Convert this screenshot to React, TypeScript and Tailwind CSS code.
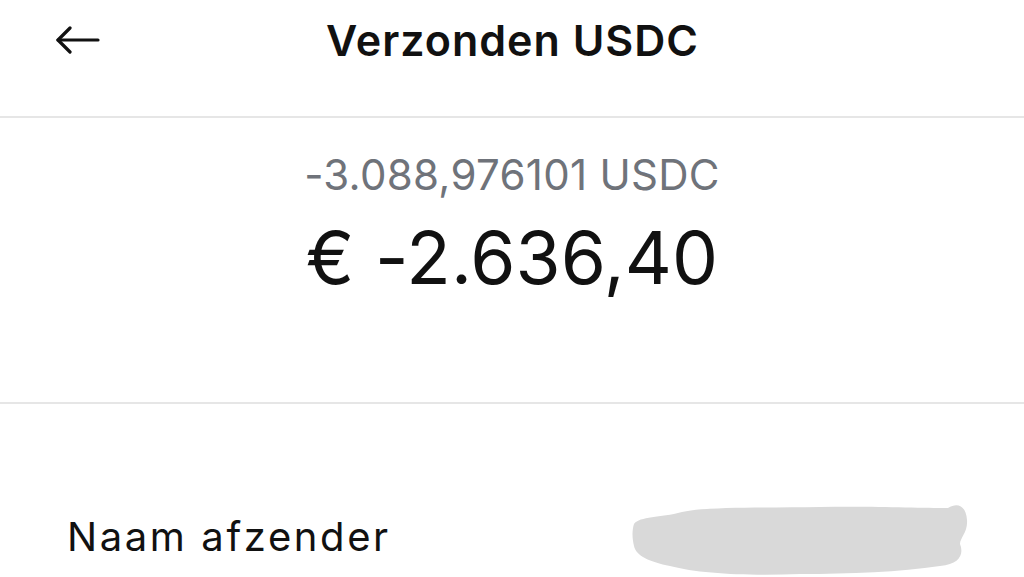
export default function App() {
  return (
    <div className="w-[1024px] h-[577px] overflow-hidden bg-white text-[#111111] font-['Inter','Liberation_Sans',sans-serif]">
      {/* Header */}
      <div className="relative h-[118px] border-b-2 border-[#e6e6e6] flex items-start justify-center pt-[16px]">
        <button aria-label="Terug" className="absolute left-[55px] top-[26px] w-[46px] h-[28px]">
          <svg width="46" height="28" viewBox="0 0 46 28" fill="none" stroke="#111111" strokeWidth="3.2" strokeLinecap="round" strokeLinejoin="round">
            <path d="M3 14H43" />
            <path d="M15 2L3 14L15 26" />
          </svg>
        </button>
        <h1 className="text-[43px] leading-[48px] font-semibold tracking-[1px] ml-[1px]">Verzonden USDC</h1>
      </div>

      {/* Amount */}
      <div className="h-[286px] border-b-2 border-[#e6e6e6] flex flex-col items-center pt-[33px]">
        <div className="text-[42px] leading-[48px] text-[#6f737a] tracking-[0.3px]">-3.088,976101 USDC</div>
        <div className="mt-[18px] text-[73px] leading-[82px] text-[#111111] tracking-[0.1px]">€ -2.636,40</div>
      </div>

      {/* Row */}
      <div className="flex items-center justify-between pl-[67px] pr-[54px] pt-[98px]">
        <div className="text-[40px] leading-[48px] tracking-[2.6px] mb-[6px]">Naam afzender</div>
        <svg width="340" height="76" viewBox="0 0 340 76">
          <path
            d="M4 22 C10 14 30 16 52 10 C80 4 140 6 190 5 C240 4 290 6 318 6 C328 0 336 4 337 18 C338 30 330 36 330 42 C334 52 330 62 310 64 C270 70 220 72 170 72 C120 74 70 72 40 64 C20 60 6 54 4 44 C2 36 2 28 4 22 Z"
            fill="#d9d9d9"
          />
        </svg>
      </div>
    </div>
  );
}
